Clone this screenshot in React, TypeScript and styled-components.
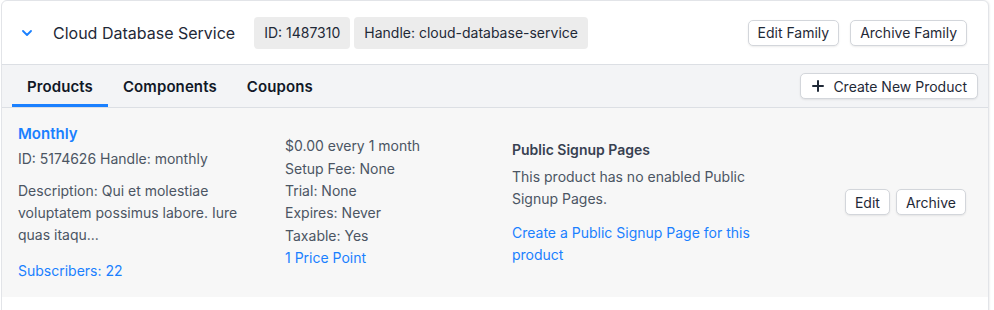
import React from "react";
import styled, { createGlobalStyle } from "styled-components";

const GlobalStyle = createGlobalStyle`
  body {
    margin: 0;
    background: #ffffff;
    font-family: Inter, "Noto Sans", sans-serif;
    color: #4b5563;
  }
`;

const tabs = ["Products", "Components", "Coupons"];

const priceLines = [
  "$0.00 every 1 month",
  "Setup Fee: None",
  "Trial: None",
  "Expires: Never",
  "Taxable: Yes",
];

const Page = () => {
  return (
    <>
      <GlobalStyle />
      <Wrapper>
        <Card>
          <Header>
            <Chevron viewBox="0 0 10 6" aria-hidden>
              <path d="M1 1l4 4 4-4" />
            </Chevron>
            <Title>Cloud Database Service</Title>
            <Badges>
              <Badge>ID: 1487310</Badge>
              <Badge>Handle: cloud-database-service</Badge>
            </Badges>
            <Actions>
              <Button>Edit Family</Button>
              <Button>Archive Family</Button>
            </Actions>
          </Header>

          <TabBar>
            <TabList>
              {tabs.map((t, i) => (
                <Tab key={t} $active={i === 0}>
                  {t}
                </Tab>
              ))}
            </TabList>
            <Button $wide>
              <PlusIcon viewBox="0 0 12 12" aria-hidden>
                <path d="M6 1v10M1 6h10" />
              </PlusIcon>
              Create New Product
            </Button>
          </TabBar>

          <ProductRow>
            <Column>
              <ProductName href="#">Monthly</ProductName>
              <Line $gap={3}>ID: 5174626 Handle: monthly</Line>
              <Description>
                Description: Qui et molestiae voluptatem possimus labore. Iure
                quas itaqu...
              </Description>
              <Link href="#" $gap={14}>
                Subscribers: 22
              </Link>
            </Column>

            <Column $shift={0}>
              {priceLines.map((l) => (
                <Line key={l}>{l}</Line>
              ))}
              <Link href="#">1 Price Point</Link>
            </Column>

            <Column $shift={1}>
              <Heading>Public Signup Pages</Heading>
              <Line $gap={4}>
                This product has no enabled Public Signup Pages.
              </Line>
              <Link href="#" $gap={11}>
                Create a Public Signup Page for this product
              </Link>
            </Column>

            <RowActions>
              <Button>Edit</Button>
              <Button>Archive</Button>
            </RowActions>
          </ProductRow>
          <Spacer />
        </Card>
      </Wrapper>
    </>
  );
};

const Wrapper = styled.div`
  padding: 0 5px 0 1px;
`;

const Card = styled.div`
  border: 1px solid #e2e4e8;
  border-radius: 6px;
  background: #ffffff;
  overflow: hidden;
  box-shadow: 1px 0 2px rgba(0, 0, 0, 0.06);
`;

const Header = styled.div`
  height: 63px;
  display: flex;
  align-items: center;
  padding: 0 21px 0 20px;
  border-bottom: 1px solid #dcdfe4;
`;

const Chevron = styled.svg`
  width: 10px;
  height: 6px;
  fill: none;
  stroke: #1a80ff;
  stroke-width: 1.8;
  stroke-linecap: round;
  stroke-linejoin: round;
  margin-right: 21px;
`;

const Title = styled.h2`
  margin: 0 19px 0 0;
  font-size: 16px;
  font-weight: 400;
  color: #1f2937;
`;

const Badges = styled.div`
  display: flex;
  gap: 4px;
`;

const Badge = styled.span`
  display: inline-flex;
  align-items: center;
  height: 32px;
  padding: 0 10px;
  border-radius: 4px;
  background: #ececec;
  font-size: 14px;
  color: #1f2937;
`;

const Actions = styled.div`
  margin-left: auto;
  display: flex;
  gap: 11px;
`;

const Button = styled.button<{ $wide?: boolean }>`
  display: inline-flex;
  align-items: center;
  gap: 9px;
  height: 26px;
  padding: 0 ${(p) => (p.$wide ? 10 : 9)}px 0 ${(p) => (p.$wide ? 11 : 9)}px;
  border: 1px solid #d3d6db;
  border-radius: 5px;
  background: #ffffff;
  box-shadow: 0 1px 2px rgba(0, 0, 0, 0.08);
  font-family: Inter, "Noto Sans", sans-serif;
  font-size: 14px;
  color: #1f2937;
  cursor: pointer;
`;

const PlusIcon = styled.svg`
  width: 12px;
  height: 12px;
  fill: none;
  stroke: #1f2937;
  stroke-width: 2;
  stroke-linecap: round;
`;

const TabBar = styled.div`
  height: 42px;
  display: flex;
  align-items: center;
  justify-content: space-between;
  padding: 0 10px;
  background: #f3f4f6;
  border-bottom: 1px solid #dcdfe4;
`;

const TabList = styled.div`
  display: flex;
  align-self: stretch;
`;

const Tab = styled.div<{ $active?: boolean }>`
  display: flex;
  align-items: center;
  padding: 0 15px;
  font-size: 15px;
  font-weight: 600;
  letter-spacing: 0.1px;
  color: #111827;
  box-shadow: ${(p) => (p.$active ? "inset 0 -3px 0 #1a80ff" : "none")};
`;

const ProductRow = styled.div`
  display: grid;
  grid-template-columns: 249px 209px 250px 1fr;
  column-gap: 18px;
  align-items: center;
  padding: 14px 22px 14px 16px;
  background: #f7f7f7;
`;

const Column = styled.div<{ $shift?: number }>`
  display: flex;
  flex-direction: column;
  align-items: flex-start;
  padding-top: ${(p) => p.$shift ?? 0}px;
  font-size: 14px;
  line-height: 22.4px;
`;

const ProductName = styled.a`
  font-size: 15px;
  font-weight: 600;
  color: #1a80ff;
  text-decoration: none;
  line-height: 22px;
  padding-top: 1px;
`;

const Line = styled.div<{ $gap?: number }>`
  margin-top: ${(p) => p.$gap ?? 0}px;
  color: #4b5563;
`;

const Description = styled.div`
  margin-top: 10px;
  line-height: 22px;
  color: #4b5563;
`;

const Heading = styled.div`
  font-weight: 600;
  color: #374151;
`;

const Link = styled.a<{ $gap?: number }>`
  margin-top: ${(p) => p.$gap ?? 0}px;
  color: #1a80ff;
  text-decoration: none;
`;

const RowActions = styled.div`
  justify-self: end;
  display: flex;
  gap: 6px;
`;

const Spacer = styled.div`
  height: 20px;
`;

export default Page;
